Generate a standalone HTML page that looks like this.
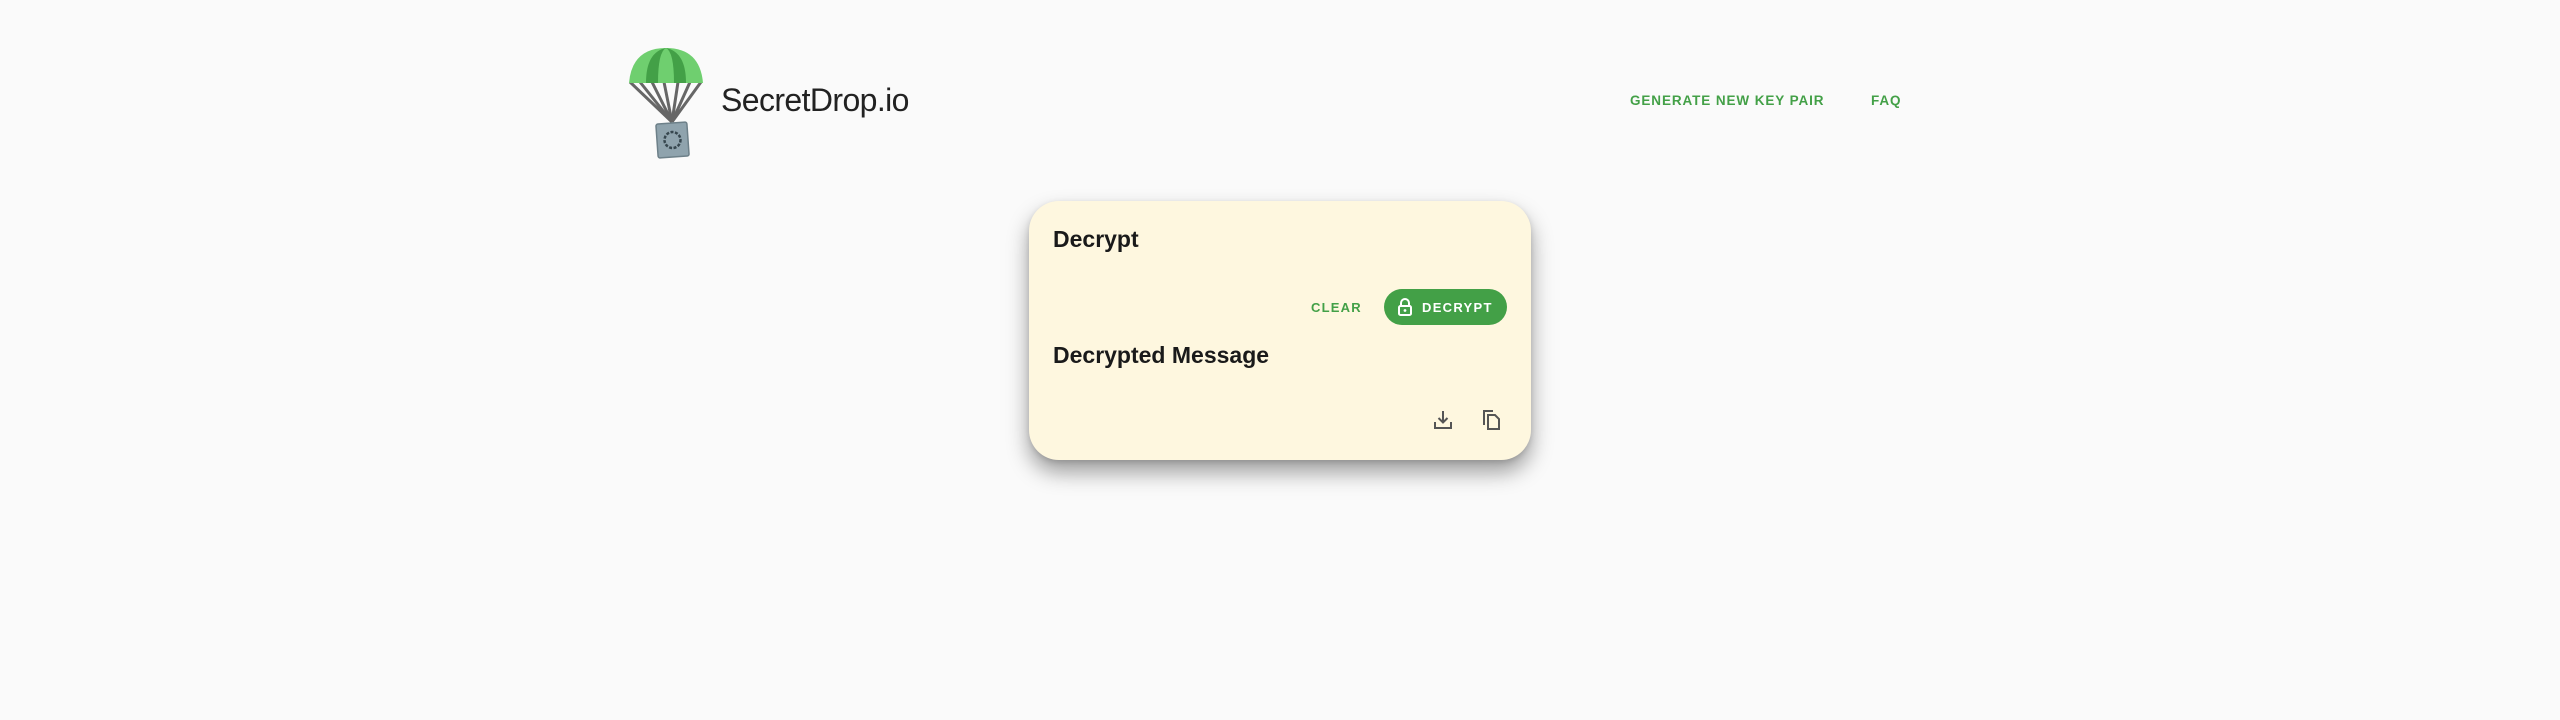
<!DOCTYPE html>
<html><head><meta charset="utf-8"><style>
html,body{margin:0;padding:0;width:2560px;height:720px;background:#fafafa;overflow:hidden;font-family:"Liberation Sans",sans-serif}
.logo{position:absolute;left:626px;top:44px}
.brand{position:absolute;left:721px;top:82px;font-size:32px;color:#222;letter-spacing:-0.6px}
.nav{position:absolute;top:93px;font-size:13.5px;color:#43a047;font-weight:bold;letter-spacing:0.9px}
.card{position:absolute;left:1029px;top:201px;width:502px;height:259px;background:#fef7df;border-radius:30px;box-shadow:0 12px 22px rgba(0,0,0,0.38),0 2px 6px rgba(0,0,0,0.12)}
.h{position:absolute;left:24px;font-size:23px;font-weight:bold;color:#1a1a1a}
.clear{position:absolute;left:282px;top:99px;font-size:13px;font-weight:bold;color:#43a047;letter-spacing:1.2px}
.btn{position:absolute;left:355px;top:88px;width:123px;height:36px;border-radius:18px;background:#43a047;color:#fff;font-size:13px;font-weight:bold;letter-spacing:1.3px}
.btn span{position:absolute;left:38px;top:11px}
.btn svg{position:absolute;left:13px;top:9px}
.ic{position:absolute;top:208px}
</style></head><body>
<svg class="logo" width="80" height="116" viewBox="0 0 80 116">
 <g stroke="#666" stroke-width="3" fill="none">
  <line x1="4" y1="38" x2="46" y2="78"/><line x1="14" y1="38" x2="46" y2="78"/><line x1="26" y1="38" x2="46" y2="78"/>
  <line x1="38" y1="38" x2="46" y2="78"/><line x1="52" y1="38" x2="46" y2="78"/><line x1="64" y1="38" x2="46" y2="78"/><line x1="75" y1="38" x2="46" y2="78"/>
 </g>
 <path d="M3 39 Q6 4 40 4 Q74 4 77 39 Z" fill="#6fcf6f"/>
 <path d="M20 39 Q20 8 40 4 Q60 8 60 39 Z" fill="#43a047"/>
 <path d="M32 39 Q32 8 40 4 Q48 8 48 39 Z" fill="#6fcf6f"/>
 <g transform="rotate(-4 47 96)">
  <rect x="31" y="79" width="31" height="34" rx="2" fill="#8fa3ad" stroke="#6d8089" stroke-width="1.5"/>
  <circle cx="46.5" cy="96" r="8" fill="none" stroke="#37474f" stroke-width="2.5" stroke-dasharray="3 1.5"/>
 </g>
</svg>
<div class="brand">SecretDrop.io</div>
<div class="nav" style="left:1630px">GENERATE NEW KEY PAIR</div>
<div class="nav" style="left:1871px">FAQ</div>
<div class="card">
 <div class="h" style="top:25px">Decrypt</div>
 <div class="clear">CLEAR</div>
 <div class="btn"><svg width="16" height="18" viewBox="0 0 16 18"><path d="M4 8V5a4 4 0 0 1 8 0v3" fill="none" stroke="#fff" stroke-width="2"/><rect x="2" y="8" width="12" height="9" rx="1.5" fill="none" stroke="#fff" stroke-width="2"/><circle cx="8" cy="12.5" r="1.4" fill="#fff"/></svg><span>DECRYPT</span></div>
 <div class="h" style="top:141px">Decrypted Message</div>
 <svg class="ic" style="left:403px" width="22" height="22" viewBox="0 0 22 22"><path d="M11 2v11M6.5 9l4.5 4.5L15.5 9M3 13v6h16v-6" fill="none" stroke="#555" stroke-width="2"/></svg>
 <svg class="ic" style="left:451px" width="22" height="22" viewBox="0 0 22 22"><path d="M4 16V2h9" fill="none" stroke="#555" stroke-width="2"/><path d="M8 6h7l4 4v10H8z" fill="none" stroke="#555" stroke-width="2"/></svg>
</div>
</body></html>
